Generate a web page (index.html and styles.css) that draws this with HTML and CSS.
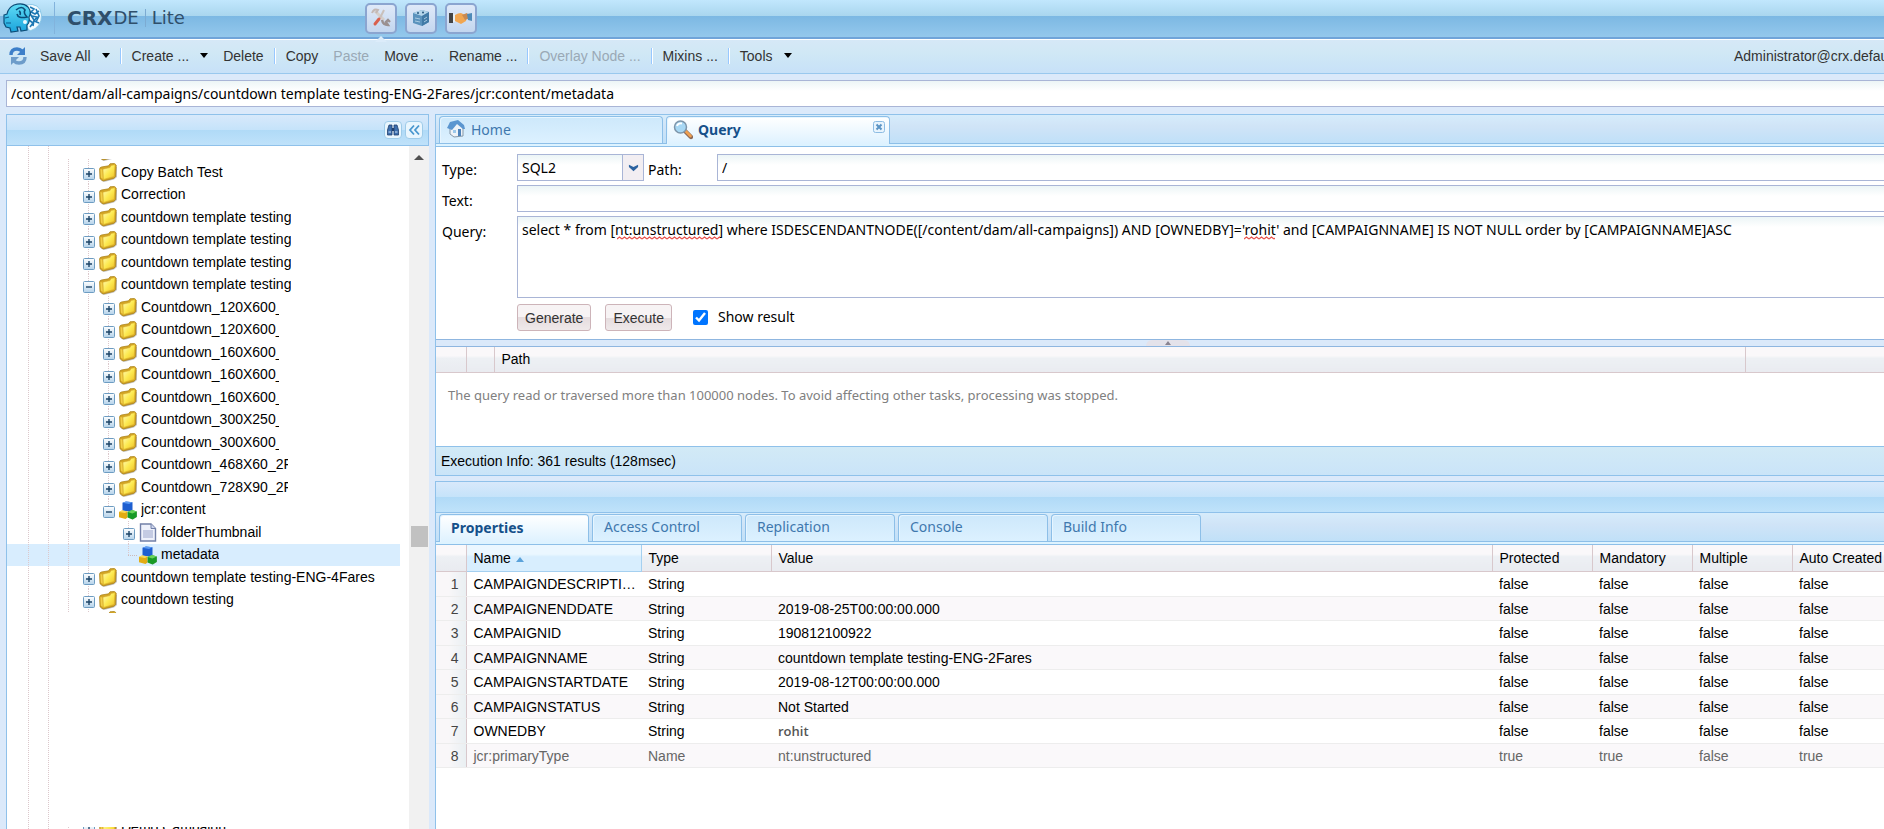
FILE: index.html
```html
<!DOCTYPE html>
<html lang="en">
<head>
    <meta charset="UTF-8">
    <meta name="viewport" content="width=device-width, initial-scale=1.0">
    <title>CRXDE Lite</title>
    <link rel="stylesheet" href="styles.css">
</head>
<body>
    <!-- shared icons -->
    <svg class="defs" width="0" height="0" aria-hidden="true">
        <defs>
            <linearGradient id="gold" x1="0" y1="0" x2="1" y2="1">
                <stop offset="0" stop-color="#fffbc0"/>
                <stop offset="0.5" stop-color="#fdea52"/>
                <stop offset="1" stop-color="#eec024"/>
            </linearGradient>
            <linearGradient id="boxfill" x1="0" y1="0" x2="0" y2="1">
                <stop offset="0" stop-color="#ffffff"/>
                <stop offset="1" stop-color="#b4d2ea"/>
            </linearGradient>
            <linearGradient id="cyan" x1="0" y1="0" x2="0" y2="1">
                <stop offset="0" stop-color="#5fdcf5"/>
                <stop offset="1" stop-color="#1ba4dc"/>
            </linearGradient>
            <pattern id="zigzag" width="5" height="4" patternUnits="userSpaceOnUse">
                <path d="M0 3 L2.5 1 L5 3" fill="none" stroke="#e8504a" stroke-width="1.2"/>
            </pattern>
            <symbol id="folder" viewBox="0 0 18 19">
                <path d="M2 17.5 L5 19 L15 16.5 L18 14 V4 L16 3 Z" fill="#8b8b93" opacity="0.5"/>
                <path d="M0.6 6 Q0.6 4.4 2.4 4 L9.5 2.8 L11 0.8 L15.5 0.4 L17.2 2 L16.6 13.7 L14.6 15.4 L4 18 L1 15.8 Z" fill="#d3a526" stroke="#a67c10" stroke-width="0.7"/>
                <path d="M4 6.2 L11 4.6 L12.2 2.4 L16 1.8 L15.2 13.4 L4.4 16.4 Z" fill="url(#gold)" stroke="#d8ae28" stroke-width="0.5"/>
                <path d="M1.4 6 L3.4 6.4 L3.8 16 L1.8 14.6 Z" fill="#f2cf4a"/>
            </symbol>
            <symbol id="plus" viewBox="0 0 12 12">
                <rect x="0.5" y="0.5" width="11" height="11" rx="1" fill="url(#boxfill)" stroke="#6d9cc2"/>
                <path d="M3 6 H9 M6 3 V9" stroke="#1c4467" stroke-width="1.4"/>
            </symbol>
            <symbol id="minus" viewBox="0 0 12 12">
                <rect x="0.5" y="0.5" width="11" height="11" rx="1" fill="url(#boxfill)" stroke="#6d9cc2"/>
                <path d="M3 6 H9" stroke="#1c4467" stroke-width="1.4"/>
            </symbol>
            <symbol id="cubes" viewBox="0 0 18 18">
                <path d="M8 15 L14 18 L18 15 V10 Z" fill="#777" opacity="0.5"/>
                <path d="M3.5 1.2 L7 0 L13.5 0.8 V8.4 L10.5 10 L3.5 9 Z" fill="#1e5fd0"/>
                <path d="M3.5 1.2 L7 0 L13.5 0.8 L10 2.6 Z" fill="#5b9bf2"/>
                <path d="M0 10.5 L3 9 L8.5 10 V16 L6.5 17.5 L0 15.8 Z" fill="#e2ac14"/>
                <path d="M0 10.5 L3 9 L8.5 10 L6 11.5 Z" fill="#fbdc5a"/>
                <path d="M8.6 10.6 L13 8.6 L17.8 10 V15.4 L13.5 18 L8.6 16 Z" fill="#189a26"/>
                <path d="M8.6 10.6 L13 8.6 L17.8 10 L13.4 12 Z" fill="#6ad35c"/>
            </symbol>
            <symbol id="page" viewBox="0 0 18 19">
                <path d="M1.5 1 H12 L16.5 5.5 V18 H1.5 Z" fill="#eef1fb" stroke="#7280a8" stroke-width="1.4"/>
                <path d="M12 1 V5.5 H16.5" fill="#cfd7ee" stroke="#7280a8"/>
                <path d="M4 8 H14 M4 10 H14 M4 12 H14 M4 14 H14" stroke="#b6bfdc" stroke-width="1.3"/>
            </symbol>
        </defs>
    </svg>

    <header class="banner">
        <svg class="logo" viewBox="0 0 40 30" aria-hidden="true">
            <path d="M23 2 Q37 -1 38.500 12 Q39 24 27 28 L22 22 Z" fill="#f3fbff" stroke="#8cc9e8"/>
            <path d="M27 4 l4 2 l-3 3 l4 2 l4 -3 M29 13 l5 1 l-3 4 l5 2 M26 17 l4 3 l-3 4 M33 6 l3 7 l-3 6 M26 9 l5 8 l-1 6" fill="none" stroke="#1d78b4" stroke-width="1.6"/>
            <path d="M1 12 L4 11 Q5 5 11 2 Q20 -1 25 4 Q29 9 26 14 Q27 20 24 22 L24 27 L18 28 L17 24 L14 24 L15 28 L8 29 L7 25 L3 24 L1 20 Z" fill="url(#cyan)" stroke="#0b4d78" stroke-width="1.2"/>
            <path d="M13 7 Q19 2 22 7 Q20 10 24 14 Q15 16 14 11 M16 8 q2 1 1 4" fill="none" stroke="#0b4d78" stroke-width="1.6"/>
            <circle cx="22" cy="19" r="2" fill="#eafaff"/>
            <path d="M2 15 L6 14 M3 20 L8 20" stroke="#0b5d90" stroke-width="1.2"/>
        </svg>
        <h1 class="brand"><b>CRX</b><span>DE</span><i></i><span>Lite</span></h1>
        <nav class="apps">
            <a class="app current" href="#" aria-label="Development">
                <svg viewBox="0 0 22 22"><path d="M5 4 L14 13" stroke="#d5cfcb" stroke-width="3"/><path d="M2 6 Q4 1 8 3 L6 6" fill="none" stroke="#c3b8b5" stroke-width="2"/><path d="M14 3 L10 11" stroke="#c9c0bb" stroke-width="2"/><path d="M9 12 L5 17" stroke="#d9604e" stroke-width="3" stroke-linecap="round"/><path d="M12 13 Q13 18 18 18 L16 15 L18 13 L20 15" fill="none" stroke="#9a9090" stroke-width="2.4"/></svg>
            </a>
            <a class="app" href="#" aria-label="Packages">
                <svg viewBox="0 0 22 22"><path d="M3 6 L12 3 L19 5 V15 L12 19 L3 16 Z" fill="#5b93bd"/><path d="M3 6 L12 3 L19 5 L12 9 Z" fill="#b4d5ea"/><path d="M12 9 L19 5 V15 L12 19 Z" fill="#417aa6"/><path d="M5 11 L10 12 M5 14 L10 15 M14 12 L17 10 M14 15 L17 13" stroke="#a8cbe2"/><circle cx="8" cy="6" r="1" fill="#27567e"/><circle cx="13" cy="5.500" r="1" fill="#27567e"/></svg>
            </a>
            <a class="app" href="#" aria-label="Share">
                <svg viewBox="0 0 24 22"><path d="M0 6 H4 V16 H0 Z" fill="#444"/><path d="M4 7 H6 V15 H4 Z" fill="#e8f0f4"/><path d="M6 8 Q9 6 12 6 L18 9 L17 14 L12 17 L6 14 Z" fill="#f2a650"/><path d="M13 8 L18 6 L21 11 L16 13 Z" fill="#c98a52"/><path d="M18 7 L23 6 V14 L19 13 Z" fill="#4f8ab8"/></svg>
            </a>
        </nav>
    </header>

    <div class="toolbar">
        <button class="tool refresh" aria-label="Refresh">
            <svg viewBox="0 0 20 20"><path d="M3 9 Q3 3 9 3 Q12 3 14 5" fill="none" stroke="#3d7fc9" stroke-width="3.4"/><path d="M17 1 V9 H9 Z" fill="#3d7fc9"/><path d="M17 11 Q17 17 11 17 Q8 17 6 15" fill="none" stroke="#6d9cca" stroke-width="3.4"/><path d="M3 19 V11 H11 Z" fill="#6d9cca"/></svg>
        </button>
        <button class="tool">Save All<span class="arrow"></span></button>
        <span class="sep"></span>
        <button class="tool">Create ...<span class="arrow"></span></button>
        <button class="tool">Delete</button>
        <span class="sep"></span>
        <button class="tool">Copy</button>
        <button class="tool" disabled>Paste</button>
        <button class="tool">Move ...</button>
        <button class="tool">Rename ...</button>
        <span class="sep"></span>
        <button class="tool" disabled>Overlay Node ...</button>
        <span class="sep"></span>
        <button class="tool">Mixins ...</button>
        <span class="sep"></span>
        <button class="tool">Tools<span class="arrow"></span></button>
        <span class="user">Administrator@crx.default</span>
    </div>

    <div class="address">
        <input class="field" type="text" aria-label="Node path" value="/content/dam/all-campaigns/countdown template testing-ENG-2Fares/jcr:content/metadata">
    </div>

    <main class="workspace">
        <aside class="sidebar">
            <div class="panel-head">
                <button class="mini" aria-label="Find">
                    <svg viewBox="0 0 12 12"><path d="M2 1 H5 V11 H0.500 V6 Z M10 1 H7 V11 H11.500 V6 Z" fill="#3c6fae" stroke="#22406e" stroke-width="0.8"/><path d="M5 4 H7 V7 H5 Z" fill="#22406e"/><path d="M1.500 8 H4 M8 8 H10.500" stroke="#cfe2f7"/></svg>
                </button>
                <button class="mini" aria-label="Collapse">
                    <svg viewBox="0 0 12 12"><path d="M6 1.500 L2 6 L6 10.500 M11 1.500 L7 6 L11 10.500" fill="none" stroke="#4a97cf" stroke-width="1.8"/></svg>
                </button>
            </div>
            <div class="tree-wrap">
                <div class="tree">
                    <ul class="nodes">
                        <li class="sliver top"><span class="g line"></span><span class="g line"></span><svg class="ico"><use href="#folder"/></svg></li>
                        <li><span class="g line"></span><button class="g line" aria-label="Expand"><svg class="box"><use href="#plus"/></svg></button><svg class="ico"><use href="#folder"/></svg><a href="#">Copy Batch Test</a></li>
                        <li><span class="g line"></span><button class="g line" aria-label="Expand"><svg class="box"><use href="#plus"/></svg></button><svg class="ico"><use href="#folder"/></svg><a href="#">Correction</a></li>
                        <li><span class="g line"></span><button class="g line" aria-label="Expand"><svg class="box"><use href="#plus"/></svg></button><svg class="ico"><use href="#folder"/></svg><a href="#">countdown template testing</a></li>
                        <li><span class="g line"></span><button class="g line" aria-label="Expand"><svg class="box"><use href="#plus"/></svg></button><svg class="ico"><use href="#folder"/></svg><a href="#">countdown template testing</a></li>
                        <li><span class="g line"></span><button class="g line" aria-label="Expand"><svg class="box"><use href="#plus"/></svg></button><svg class="ico"><use href="#folder"/></svg><a href="#">countdown template testing</a></li>
                        <li><span class="g line"></span><button class="g line" aria-label="Collapse"><svg class="box"><use href="#minus"/></svg></button><svg class="ico"><use href="#folder"/></svg><a href="#">countdown template testing</a></li>
                        <li><span class="g line"></span><span class="g line"></span><button class="g line" aria-label="Expand"><svg class="box"><use href="#plus"/></svg></button><svg class="ico"><use href="#folder"/></svg><a class="cut" href="#">Countdown_120X600_</a></li>
                        <li><span class="g line"></span><span class="g line"></span><button class="g line" aria-label="Expand"><svg class="box"><use href="#plus"/></svg></button><svg class="ico"><use href="#folder"/></svg><a class="cut" href="#">Countdown_120X600_</a></li>
                        <li><span class="g line"></span><span class="g line"></span><button class="g line" aria-label="Expand"><svg class="box"><use href="#plus"/></svg></button><svg class="ico"><use href="#folder"/></svg><a class="cut" href="#">Countdown_160X600_</a></li>
                        <li><span class="g line"></span><span class="g line"></span><button class="g line" aria-label="Expand"><svg class="box"><use href="#plus"/></svg></button><svg class="ico"><use href="#folder"/></svg><a class="cut" href="#">Countdown_160X600_</a></li>
                        <li><span class="g line"></span><span class="g line"></span><button class="g line" aria-label="Expand"><svg class="box"><use href="#plus"/></svg></button><svg class="ico"><use href="#folder"/></svg><a class="cut" href="#">Countdown_160X600_</a></li>
                        <li><span class="g line"></span><span class="g line"></span><button class="g line" aria-label="Expand"><svg class="box"><use href="#plus"/></svg></button><svg class="ico"><use href="#folder"/></svg><a class="cut" href="#">Countdown_300X250_</a></li>
                        <li><span class="g line"></span><span class="g line"></span><button class="g line" aria-label="Expand"><svg class="box"><use href="#plus"/></svg></button><svg class="ico"><use href="#folder"/></svg><a class="cut" href="#">Countdown_300X600_</a></li>
                        <li><span class="g line"></span><span class="g line"></span><button class="g line" aria-label="Expand"><svg class="box"><use href="#plus"/></svg></button><svg class="ico"><use href="#folder"/></svg><a class="cut wide" href="#">Countdown_468X60_2F</a></li>
                        <li><span class="g line"></span><span class="g line"></span><button class="g line" aria-label="Expand"><svg class="box"><use href="#plus"/></svg></button><svg class="ico"><use href="#folder"/></svg><a class="cut wide" href="#">Countdown_728X90_2F</a></li>
                        <li><span class="g line"></span><span class="g line"></span><button class="g line end" aria-label="Collapse"><svg class="box"><use href="#minus"/></svg></button><svg class="ico"><use href="#cubes"/></svg><a href="#">jcr:content</a></li>
                        <li><span class="g line"></span><span class="g line"></span><span class="g"></span><button class="g line" aria-label="Expand"><svg class="box"><use href="#plus"/></svg></button><svg class="ico"><use href="#page"/></svg><a href="#">folderThumbnail</a></li>
                        <li class="selected"><span class="g line"></span><span class="g line"></span><span class="g"></span><span class="g line end elbow"></span><svg class="ico"><use href="#cubes"/></svg><a href="#">metadata</a></li>
                        <li><span class="g line"></span><button class="g line" aria-label="Expand"><svg class="box"><use href="#plus"/></svg></button><svg class="ico"><use href="#folder"/></svg><a href="#">countdown template testing-ENG-4Fares</a></li>
                        <li><span class="g line"></span><button class="g line" aria-label="Expand"><svg class="box"><use href="#plus"/></svg></button><svg class="ico"><use href="#folder"/></svg><a href="#">countdown testing</a></li>
                        <li class="sliver"><span class="g line"></span><span class="g line"></span><svg class="ico"><use href="#folder"/></svg></li>
                    </ul>
                    <ul class="nodes rest">
                        <li class="sliver last"><span class="g line"></span><button class="g" aria-label="Expand"><svg class="box"><use href="#plus"/></svg></button><svg class="ico"><use href="#folder"/></svg><a href="#">Demo Campaign</a></li>
                    </ul>
                </div>
                <div class="scrollbar"><span class="up"></span><span class="thumb"></span></div>
            </div>
        </aside>

        <div class="content">
            <section class="query-panel">
                <div class="tabs">
                    <button class="tab big">
                        <svg viewBox="0 0 20 20"><path d="M4 9 L10 3 L17 8 V17 L8 18 L4 15 Z" fill="#eef3f8" stroke="#8497a8"/><path d="M1 9 L4 3 L12 1 L18 6 L19 10 L17 10 L11 5 L6 11 Z" fill="#5b96d0"/><path d="M12 10 L15 10 V17 L12 17 Z" fill="#4d83bb"/><path d="M7 11 h3 v3 h-3 Z" fill="#9cc8ea"/></svg>
                        Home
                    </button>
                    <button class="tab big active">
                        <svg viewBox="0 0 20 20"><path d="M12 11 L18 17" stroke="#8c6a58" stroke-width="4.400" stroke-linecap="round"/><path d="M12.500 11 L17.500 16" stroke="#f0a050" stroke-width="2.600" stroke-linecap="round"/><circle cx="7.500" cy="7" r="6" fill="#a8d8f4" stroke="#7d95aa" stroke-width="1.500"/><path d="M4 6 Q5 3 9 3.500" fill="none" stroke="#fff" stroke-width="1.800"/></svg>
                        Query
                        <span class="close"><svg viewBox="0 0 12 12"><rect x="0.500" y="0.500" width="11" height="11" rx="2" fill="#e8f4fd" stroke="#8dbce3"/><path d="M3.500 3.500 L8.500 8.500 M8.500 3.500 L3.500 8.500" stroke="#5a93c4" stroke-width="2"/></svg></span>
                    </button>
                </div>
                <div class="tab-base"></div>
                <form class="query-form">
                    <label for="type">Type:</label>
                    <div class="row">
                        <div class="combo">
                            <select id="type"><option>SQL2</option></select>
                            <span class="trigger"><svg viewBox="0 0 12 8"><path d="M1 0.500 L6 3 L11 0.500 V3 L6 7.500 L1 3 Z" fill="#2b62a0"/></svg></span>
                        </div>
                        <label class="path-label" for="path">Path:</label>
                        <input class="field" id="path" type="text" value="/">
                    </div>
                    <label for="text">Text:</label>
                    <input class="field" id="text" type="text">
                    <label for="query">Query:</label>
                    <div class="query-box">
                        <textarea class="field" id="query" spellcheck="false">select * from [nt:unstructured] where ISDESCENDANTNODE([/content/dam/all-campaigns]) AND [OWNEDBY]='rohit' and [CAMPAIGNNAME] IS NOT NULL order by [CAMPAIGNNAME]ASC</textarea>
                        <svg class="spell type-name"><rect width="100%" height="4" fill="url(#zigzag)"/></svg>
                        <svg class="spell owner-name"><rect width="100%" height="4" fill="url(#zigzag)"/></svg>
                    </div>
                    <div class="actions">
                        <button class="btn" type="button">Generate</button>
                        <button class="btn" type="button">Execute</button>
                        <input id="show" type="checkbox" checked>
                        <label for="show">Show result</label>
                    </div>
                </form>
                <div class="splitter"><span class="grip"></span></div>
                <table class="grid results">
                    <colgroup><col class="c-num"><col class="c-icon"><col><col class="c-score"></colgroup>
                    <thead><tr><th></th><th></th><th>Path</th><th></th></tr></thead>
                </table>
                <p class="empty">The query read or traversed more than 100000 nodes. To avoid affecting other tasks, processing was stopped.</p>
                <div class="status">Execution Info: 361 results (128msec)</div>
            </section>

            <section class="props-panel">
                <div class="panel-head"></div>
                <div class="tabs">
                    <button class="tab active">Properties</button>
                    <button class="tab">Access Control</button>
                    <button class="tab">Replication</button>
                    <button class="tab">Console</button>
                    <button class="tab">Build Info</button>
                </div>
                <div class="tab-base"></div>
                <table class="grid props">
                    <colgroup><col class="c-num"><col class="c-name"><col class="c-type"><col><col class="c-flag"><col class="c-flag"><col class="c-flag"><col class="c-auto"></colgroup>
                    <thead>
                        <tr><th></th><th class="sorted">Name<span class="asc"></span></th><th>Type</th><th>Value</th><th>Protected</th><th>Mandatory</th><th>Multiple</th><th>Auto Created</th></tr>
                    </thead>
                    <tbody>
                        <tr><td>1</td><td>CAMPAIGNDESCRIPTION</td><td>String</td><td></td><td>false</td><td>false</td><td>false</td><td>false</td></tr>
                        <tr><td>2</td><td>CAMPAIGNENDDATE</td><td>String</td><td>2019-08-25T00:00:00.000</td><td>false</td><td>false</td><td>false</td><td>false</td></tr>
                        <tr><td>3</td><td>CAMPAIGNID</td><td>String</td><td>190812100922</td><td>false</td><td>false</td><td>false</td><td>false</td></tr>
                        <tr><td>4</td><td>CAMPAIGNNAME</td><td>String</td><td>countdown template testing-ENG-2Fares</td><td>false</td><td>false</td><td>false</td><td>false</td></tr>
                        <tr><td>5</td><td>CAMPAIGNSTARTDATE</td><td>String</td><td>2019-08-12T00:00:00.000</td><td>false</td><td>false</td><td>false</td><td>false</td></tr>
                        <tr><td>6</td><td>CAMPAIGNSTATUS</td><td>String</td><td>Not Started</td><td>false</td><td>false</td><td>false</td><td>false</td></tr>
                        <tr><td>7</td><td>OWNEDBY</td><td>String</td><td class="owner">rohit</td><td>false</td><td>false</td><td>false</td><td>false</td></tr>
                        <tr class="locked"><td>8</td><td>jcr:primaryType</td><td>Name</td><td>nt:unstructured</td><td>true</td><td>true</td><td>false</td><td>true</td></tr>
                    </tbody>
                </table>
            </section>
        </div>
    </main>
</body>
</html>
```

FILE: styles.css
```css
* {
    box-sizing: border-box;
}
body {
    margin: 0;
    height: 100vh;
    display: flex;
    flex-direction: column;
    overflow: hidden;
    background-color: #dbe9fa;
    color: #000;
    font-family: "Liberation Sans", Arial, sans-serif;
    font-size: 14px;
}
button, input, select, textarea {
    font-family: inherit;
    font-size: inherit;
    color: inherit;
}
button {
    border: none;
    background: none;
    padding: 0;
}
a {
    color: inherit;
    text-decoration: none;
}
.defs {
    position: absolute;
}

/* banner */
.banner {
    display: flex;
    align-items: center;
    height: 39px;
    flex: none;
    padding: 0 0 1px 3px;
    background: linear-gradient(#c1e7fd 0, #a9d6ee 16px, #7cb8e3 16px, #94c8ec 37px);
    border-bottom: 2px solid #70a4d9;
}
.logo {
    width: 40px;
    height: 30px;
}
.brand {
    display: flex;
    align-items: center;
    width: 311px;
    margin: 0 0 0 11px;
    padding-left: 12px;
    border-left: 1px solid #82b3dc;
    color: #2f4f6b;
    font: 18px/32px "DejaVu Sans", sans-serif;
}
.brand i {
    width: 1px;
    height: 18px;
    margin: 0 6px;
    background-color: #7cabd2;
}
.brand b {
    margin-right: 1px;
    font-size: 20px;
}
.apps {
    display: flex;
    gap: 8px;
}
.app {
    position: relative;
    display: flex;
    align-items: center;
    justify-content: center;
    width: 32px;
    height: 31px;
    border: 2px solid #8ba5d0;
    border-radius: 5px;
    background: linear-gradient(#dfe9f8, #c3d6ef);
}
.app svg {
    width: 24px;
    height: 22px;
}
.current::after {
    content: "";
    position: absolute;
    top: 31px;
    left: 8px;
    border: 6px solid transparent;
    border-top: 0;
    border-bottom-color: #dcecfa;
}

/* toolbar */
.toolbar {
    display: flex;
    align-items: center;
    gap: 1px;
    flex: none;
    height: 35px;
    padding: 0 0 2px 1px;
    background: linear-gradient(#d6e8f7, #d0e8f5 40%, #c7e1f8);
    border-top: 1px solid #fff;
    border-bottom: 1px solid #99c8ee;
    color: #333;
    white-space: nowrap;
}
.tool {
    display: flex;
    align-items: center;
    height: 24px;
    padding: 0 7px;
}
.tool:disabled {
    color: #9aa9b5;
}
.refresh svg {
    width: 20px;
    height: 20px;
}
.refresh {
    padding-right: 4px;
}
.arrow {
    margin-left: 11px;
    border: 4px solid transparent;
    border-top: 5px solid #000;
    border-bottom: 0;
}
.sep {
    width: 2px;
    height: 16px;
    margin: 0 2px;
    background-color: #98c8ff;
    border-right: 1px solid #fff;
}
.user {
    width: 150px;
    margin-left: auto;
}

/* text fields */
.field {
    height: 27px;
    width: 100%;
    margin: 0;
    padding: 0 4px;
    border: 1px solid #a9b5d6;
    border-radius: 0;
    background: linear-gradient(#ecf5f6, #fff 10px);
    font-family: "Noto Sans", Tahoma, sans-serif;
    outline: none;
}
.address {
    flex: none;
    padding: 6px 0 7px 6px;
}
.address .field {
    display: block;
    border-right: 0;
}

/* main area */
.workspace {
    flex: 1;
    display: flex;
    gap: 6px;
    min-height: 0;
    padding-left: 6px;
}
.panel-head {
    display: flex;
    align-items: center;
    justify-content: flex-end;
    gap: 3px;
    flex: none;
    height: 32px;
    padding-right: 5px;
    background: linear-gradient(#d8e9fb, #c5e3fa 15px, #b0daf7 15px, #bfe2fa);
    border: 1px solid #8fc1ea;
}
.sidebar {
    display: flex;
    flex-direction: column;
    flex: none;
    width: 423px;
}
.mini {
    display: flex;
    align-items: center;
    justify-content: center;
    width: 18px;
    height: 18px;
    border: 1px solid #9ecbe9;
    border-radius: 4px;
    background-color: #e9f6fe;
}
.mini svg {
    width: 12px;
    height: 12px;
}
.tree-wrap {
    flex: 1;
    display: flex;
    min-height: 0;
    background-color: #fff;
    border-left: 1px solid #8fc1ea;
}
.tree {
    flex: 1;
    display: flex;
    flex-direction: column;
    overflow: hidden;
    padding-top: 13px;
    background:
        repeating-linear-gradient(#dcc8cc 0 1px, transparent 1px 2px) 21px 0 / 1px 100% no-repeat,
        repeating-linear-gradient(#dcc8cc 0 1px, transparent 1px 2px) 41px 0 / 1px 100% no-repeat;
}
.nodes {
    margin: 0;
    padding: 0;
    list-style: none;
}
.rest {
    margin-top: auto;
}
.nodes li {
    display: flex;
    align-items: center;
    height: 22px;
    margin-right: 9px;
    padding-left: 52px;
    white-space: nowrap;
}
.nodes li:nth-child(even) {
    height: 23px;
}
.nodes .selected {
    background:
        repeating-linear-gradient(#dcc8cc 0 1px, transparent 1px 2px) 21px 0 / 1px 100% no-repeat,
        repeating-linear-gradient(#dcc8cc 0 1px, transparent 1px 2px) 41px 0 / 1px 100% no-repeat,
        #d8edfe;
}
.nodes a {
    margin-left: 4px;
    padding-bottom: 2px;
    overflow: hidden;
}
.nodes .cut {
    width: 138px;
}
.nodes .wide {
    width: 147px;
}
.nodes li.sliver {
    height: 2px;
    overflow: hidden;
    align-items: flex-start;
}
.nodes li.top {
    align-items: flex-end;
}
.nodes li.last {
    align-items: center;
}
.g {
    display: flex;
    align-items: center;
    align-self: stretch;
    flex: none;
    width: 20px;
    padding: 3px 0 0 4px;
}
.line {
    background: repeating-linear-gradient(#dcc8cc 0 1px, transparent 1px 2px) 9px 0 / 1px 100% no-repeat;
}
.end {
    background-size: 1px 50%;
}
.elbow::after {
    content: "";
    width: 9px;
    margin: 0 0 2px 5px;
    border-top: 1px dotted #cbb;
}
.box {
    width: 12px;
    height: 12px;
}
.ico {
    flex: none;
    width: 18px;
    height: 19px;
}
.scrollbar {
    display: flex;
    flex-direction: column;
    align-items: center;
    width: 20px;
    background-color: #f1f1f1;
}
.up {
    margin-top: 9px;
    border: 5px solid transparent;
    border-top: 0;
    border-bottom-color: #505050;
}
.thumb {
    width: 17px;
    height: 21px;
    margin-top: 366px;
    background-color: #c1c1c1;
}

/* right side */
.content {
    flex: 1;
    display: flex;
    flex-direction: column;
    gap: 5px;
    min-width: 0;
}
.query-panel, .props-panel {
    background-color: #fff;
    border: 1px solid #8fc1ea;
    border-right: 0;
}
.props-panel {
    flex: 1;
    border-bottom: 0;
    min-height: 0;
}
.props-panel .panel-head {
    height: 31px;
    border-width: 0 0 1px;
}
.tabs {
    display: flex;
    gap: 3px;
    height: 29px;
    padding: 1px 0 0 3px;
    background: linear-gradient(#d6ecfb, #d0e4f7 40%, #c0e0f8);
    border-bottom: 1px solid #8dbfe8;
}
.tab {
    display: flex;
    align-items: center;
    width: 150px;
    height: 27px;
    padding: 0 11px 2px;
    border: 1px solid #8dbfe8;
    border-bottom: 0;
    border-radius: 4px 4px 0 0;
    background: linear-gradient(#cde8fb, #dcf1ff);
    box-shadow: inset 1px 1px #e6f5ff;
    color: #3f78ae;
    font-family: "Noto Sans", Tahoma, sans-serif;
}
.active {
    height: 28px;
    background: linear-gradient(#fff, #def2ff);
    color: #15508a;
    font-weight: bold;
}
.big {
    width: 224px;
    padding: 0 4px 2px 6px;
    gap: 5px;
}
.big svg {
    width: 20px;
    height: 20px;
}
.close {
    align-self: flex-start;
    display: flex;
    margin: 4px 0 0 auto;
}
.big .close svg {
    width: 12px;
    height: 12px;
}
.tab-base {
    height: 3px;
    background-color: #ddf3ff;
    border-bottom: 1px solid #8dbfe8;
}

/* query form */
.query-form {
    display: grid;
    grid-template-columns: 75px 1fr;
    row-gap: 4px;
    padding: 7px 0 8px 6px;
    font-family: "Noto Sans", Tahoma, sans-serif;
}
.query-form label {
    padding-top: 6px;
    line-height: 20px;
}
.row {
    display: flex;
}
.combo {
    position: relative;
    flex: none;
    width: 127px;
}
.combo select {
    appearance: none;
    width: 100%;
    height: 27px;
    padding: 0 4px;
    border: 1px solid #a9b5d6;
    border-radius: 0;
    background: linear-gradient(#ecf5f6, #fff 10px);
}
.trigger {
    position: absolute;
    top: 1px;
    right: 1px;
    display: flex;
    align-items: center;
    justify-content: center;
    width: 21px;
    height: 25px;
    background-color: #f2eef2;
    border-left: 1px solid #a9b5d6;
    pointer-events: none;
}
.trigger svg {
    width: 11px;
    height: 8px;
}
.query-form .path-label {
    flex: none;
    width: 73px;
    padding-left: 4px;
}
.row .field, .query-form .field {
    border-right: 0;
}
.query-box {
    position: relative;
    height: 82px;
}
.query-box .field {
    display: block;
    height: 82px;
    padding: 3px 4px;
    line-height: 20px;
    resize: none;
}
.spell {
    position: absolute;
    top: 20px;
    height: 4px;
}
.type-name {
    left: 100px;
    width: 103px;
}
.owner-name {
    left: 727px;
    width: 31px;
}
.actions {
    grid-column: 2;
    display: flex;
    align-items: center;
    margin-top: 2px;
}
.btn {
    height: 27px;
    margin-right: 14px;
    padding: 0 7px;
    border: 1px solid #cdb4b9;
    border-radius: 3px;
    background: linear-gradient(#f7f3f4 50%, #e5dcde 50%, #efe9ea);
    color: #333;
    font-family: "Liberation Sans", Arial, sans-serif;
}
.actions input {
    width: 15px;
    height: 15px;
    margin: 0 10px 0 7px;
    accent-color: #0075ff;
}
.query-form .actions label {
    padding: 0 0 2px;
}
.splitter {
    display: flex;
    justify-content: center;
    height: 8px;
    padding-left: 16px;
    background-color: #dbe9fa;
    border-top: 1px solid #8fb6e0;
    border-bottom: 1px solid #8fb6e0;
}
.grip {
    position: relative;
    width: 44px;
    height: 6px;
    border-radius: 6px 6px 0 0;
    background-color: #e4e2ea;
}
.grip::after {
    content: "";
    position: absolute;
    left: 19px;
    top: 1px;
    border: 3px solid transparent;
    border-top: 0;
    border-bottom: 4px solid #8a8490;
}
.empty {
    height: 73px;
    margin: 0;
    padding: 12px;
    color: #808080;
    font-family: "Noto Sans", Tahoma, sans-serif;
    font-size: 13px;
    line-height: 20px;
}
.status {
    height: 29px;
    padding-left: 5px;
    background: linear-gradient(#d2eaf6, #cae4f8);
    border-top: 1px solid #8fc1ea;
    line-height: 28px;
}

/* grids */
.grid {
    width: 100%;
    table-layout: fixed;
    border-collapse: collapse;
}
.grid th, .grid td {
    padding: 0 2px 0 7px;
    font-weight: normal;
    text-align: left;
    white-space: nowrap;
    overflow: hidden;
    text-overflow: ellipsis;
}
.grid th {
    height: 25px;
    background: linear-gradient(#faf8fa 35%, #edf0f4 45%, #e9ebf0);
    border-right: 1px solid #d8c8cc;
    border-bottom: 1px solid #d8c8cc;
}
.props th {
    height: 27px;
}
.grid .sorted {
    background: linear-gradient(#ebf7ff 35%, #d8eefe 45%);
    border-color: #a5d0f0;
}
.asc {
    display: inline-block;
    margin: 0 0 1px 5px;
    border: 4px solid transparent;
    border-top: 0;
    border-bottom: 5px solid #5aa2da;
}
.c-num {
    width: 30px;
}
.c-icon {
    width: 28px;
}
.c-name {
    width: 175px;
}
.c-type {
    width: 130px;
}
.c-flag {
    width: 100px;
}
.c-auto {
    width: 92px;
}
.c-score {
    width: 139px;
}
.grid th:last-child {
    padding-right: 0;
    border-right: 0;
}
.grid td {
    height: 25px;
    border-bottom: 1px solid #ededed;
}
.grid tr:nth-child(even) td {
    height: 24px;
    background-color: #faf8fa;
}
.grid td:first-child, .grid tr:nth-child(even) td:first-child {
    padding-right: 7px;
    background: linear-gradient(90deg, #f9f7f9 12px, #e9eff2);
    border-right: 1px solid #d8c8cc;
    color: #444;
    text-align: right;
}
.locked {
    color: #666;
}
.grid .owner {
    color: #555;
    font-family: "Open Sans", sans-serif;
    font-size: 13px;
    font-weight: 600;
}
```
